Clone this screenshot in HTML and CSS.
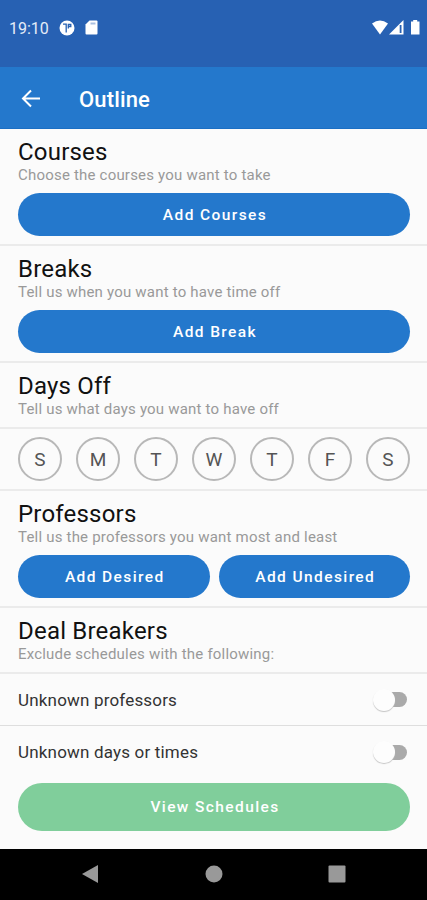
FILE: index.html
```html
<!DOCTYPE html>
<html lang="en">
<head>
    <meta charset="UTF-8">
    <meta name="viewport" content="width=device-width, initial-scale=1.0">
    <title>Outline</title>
    <link rel="stylesheet" href="styles.css">
</head>
<body>
    <div class="status">
        <span class="time">19:10</span>
        <svg class="status_app" width="16" height="16" viewBox="0 0 16 16">
            <circle cx="8" cy="8" r="7.5" fill="#fff"/>
            <path d="M4 4.200h3.200v8.300M9.300 8.500V4.500h2.500v2H9.300" fill="none" stroke="#2761b3" stroke-width="1.300"/>
        </svg>
        <svg class="status_sd" width="13" height="16" viewBox="0 0 13 16">
            <path d="M4.500 0.500h7q1 0 1 1v12q0 1-1 1h-10q-1 0-1-1V4.500z" fill="#fff"/>
            <path d="M5.500 2.500h5v2h-5z" fill="#a9bfe0"/>
        </svg>
        <svg class="status_right" width="49" height="16" viewBox="0 0 49 16">
            <path d="M0 3.500Q8-2.500 16 3.500L8 14.500z" fill="#fff"/>
            <path d="M31.500 0v14.500H17z" fill="#fff"/>
            <path d="M28.600 5v8" stroke="#2761b3" stroke-width="1.800"/>
            <path d="M39 1.500h2.200V0h4v1.500h2.300v13H39z" fill="#fff"/>
        </svg>
    </div>
    <header>
        <svg width="20" height="20" viewBox="0 0 20 20">
            <path d="M10 1.500L2 9.500l8 8M2 9.500h17" fill="none" stroke="#fff" stroke-width="2"/>
        </svg>
        <h1>Outline</h1>
    </header>
    <main>
        <section>
            <h2>Courses</h2>
            <p>Choose the courses you want to take</p>
            <div class="buttons"><button>Add Courses</button></div>
        </section>
        <section>
            <h2>Breaks</h2>
            <p>Tell us when you want to have time off</p>
            <div class="buttons"><button>Add Break</button></div>
        </section>
        <section class="title_only">
            <h2>Days Off</h2>
            <p>Tell us what days you want to have off</p>
        </section>
        <div class="days">
            <span>S</span>
            <span>M</span>
            <span>T</span>
            <span>W</span>
            <span>T</span>
            <span>F</span>
            <span>S</span>
        </div>
        <section>
            <h2>Professors</h2>
            <p>Tell us the professors you want most and least</p>
            <div class="buttons">
                <button>Add Desired</button>
                <button>Add Undesired</button>
            </div>
        </section>
        <section class="title_only">
            <h2>Deal Breakers</h2>
            <p>Exclude schedules with the following:</p>
        </section>
        <div class="option">
            <span>Unknown professors</span>
            <div class="switch"><div class="thumb"></div></div>
        </div>
        <div class="option last">
            <span>Unknown days or times</span>
            <div class="switch"><div class="thumb"></div></div>
        </div>
        <button class="view">View Schedules</button>
    </main>
    <footer>
        <svg width="18" height="20" viewBox="0 0 18 20"><path d="M17 1v18L1 10z" fill="#999"/></svg>
        <svg width="18" height="18" viewBox="0 0 18 18"><circle cx="9" cy="9" r="8.500" fill="#999"/></svg>
        <svg width="18" height="18" viewBox="0 0 18 18"><rect x=".5" y=".5" width="17" height="17" rx="1" fill="#999"/></svg>
    </footer>
</body>
</html>
```
FILE: styles.css
```css
* {
    box-sizing: border-box;
}
body {
    margin: 0;
    height: 900px;
    display: flex;
    flex-direction: column;
    background: #fbfbfb;
    font-family: Roboto, sans-serif;
    overflow: hidden;
}
.status {
    height: 67px;
    padding: 0 6px 12px 9px;
    display: flex;
    align-items: center;
    background: #2761b3;
    color: white;
}
.time {
    width: 50px;
    padding-top: 1px;
    font-size: 16px;
    color: #e4ecf8;
}
.status_sd {
    margin-left: 10px;
}
.status_right {
    margin-left: auto;
}
header {
    height: 62px;
    padding: 3px 21px 0;
    display: flex;
    align-items: center;
    gap: 38px;
    background: #2478cc;
    border-bottom: 1px solid #1b6fc4;
    color: white;
}
h1 {
    margin: 0;
    padding-top: 1px;
    font-size: 22px;
    font-weight: 500;
    letter-spacing: 0.15px;
}
main {
    flex: 1;
}
section {
    height: 117px;
    padding: 8px 17px 0 18px;
    border-bottom: 2px solid #ebebeb;
}
.title_only {
    height: 66px;
}
h2 {
    margin: 0;
    font-size: 24px;
    font-weight: 400;
    line-height: 30px;
    letter-spacing: 0.2px;
    color: #111;
}
p {
    margin: 0;
    font-size: 15px;
    line-height: 16px;
    letter-spacing: 0.2px;
    color: #999;
}
.buttons {
    display: flex;
    gap: 9px;
    margin-top: 10px;
}
button {
    flex: 1;
    height: 43px;
    padding: 0 0 0 2px;
    border: none;
    border-radius: 24px;
    background: #2478cc;
    color: white;
    font-family: inherit;
    font-size: 15.5px;
    font-weight: 500;
    letter-spacing: 1.4px;
}
.days {
    height: 62px;
    padding: 8px 17px 0 18px;
    display: flex;
    justify-content: space-between;
    border-bottom: 2px solid #ebebeb;
}
.days span {
    width: 44px;
    height: 44px;
    border: 2px solid #b8b8b8;
    border-radius: 50%;
    font-size: 19px;
    line-height: 41px;
    text-align: center;
    color: #555;
}
.option {
    height: 52px;
    padding: 0 20px 0 18px;
    display: flex;
    align-items: center;
    justify-content: space-between;
    border-bottom: 1px solid #dedede;
    font-size: 17px;
    letter-spacing: 0.18px;
    color: #333;
}
.last {
    border: none;
}
.switch {
    width: 32px;
    height: 15px;
    display: flex;
    align-items: center;
    border-radius: 8px;
    background: #aaa;
}
.thumb {
    width: 22px;
    height: 22px;
    margin-left: -2px;
    flex-shrink: 0;
    border-radius: 50%;
    background: #fdfdfd;
    box-shadow: 0 1px 1px #c4c4c4;
}
.view {
    display: block;
    width: 392px;
    height: 48px;
    margin: 5px 0 0 18px;
    background: #80ce9b;
}
footer {
    height: 51px;
    padding: 0 81px 1px 81px;
    display: flex;
    align-items: center;
    justify-content: space-between;
    background: black;
}
```
